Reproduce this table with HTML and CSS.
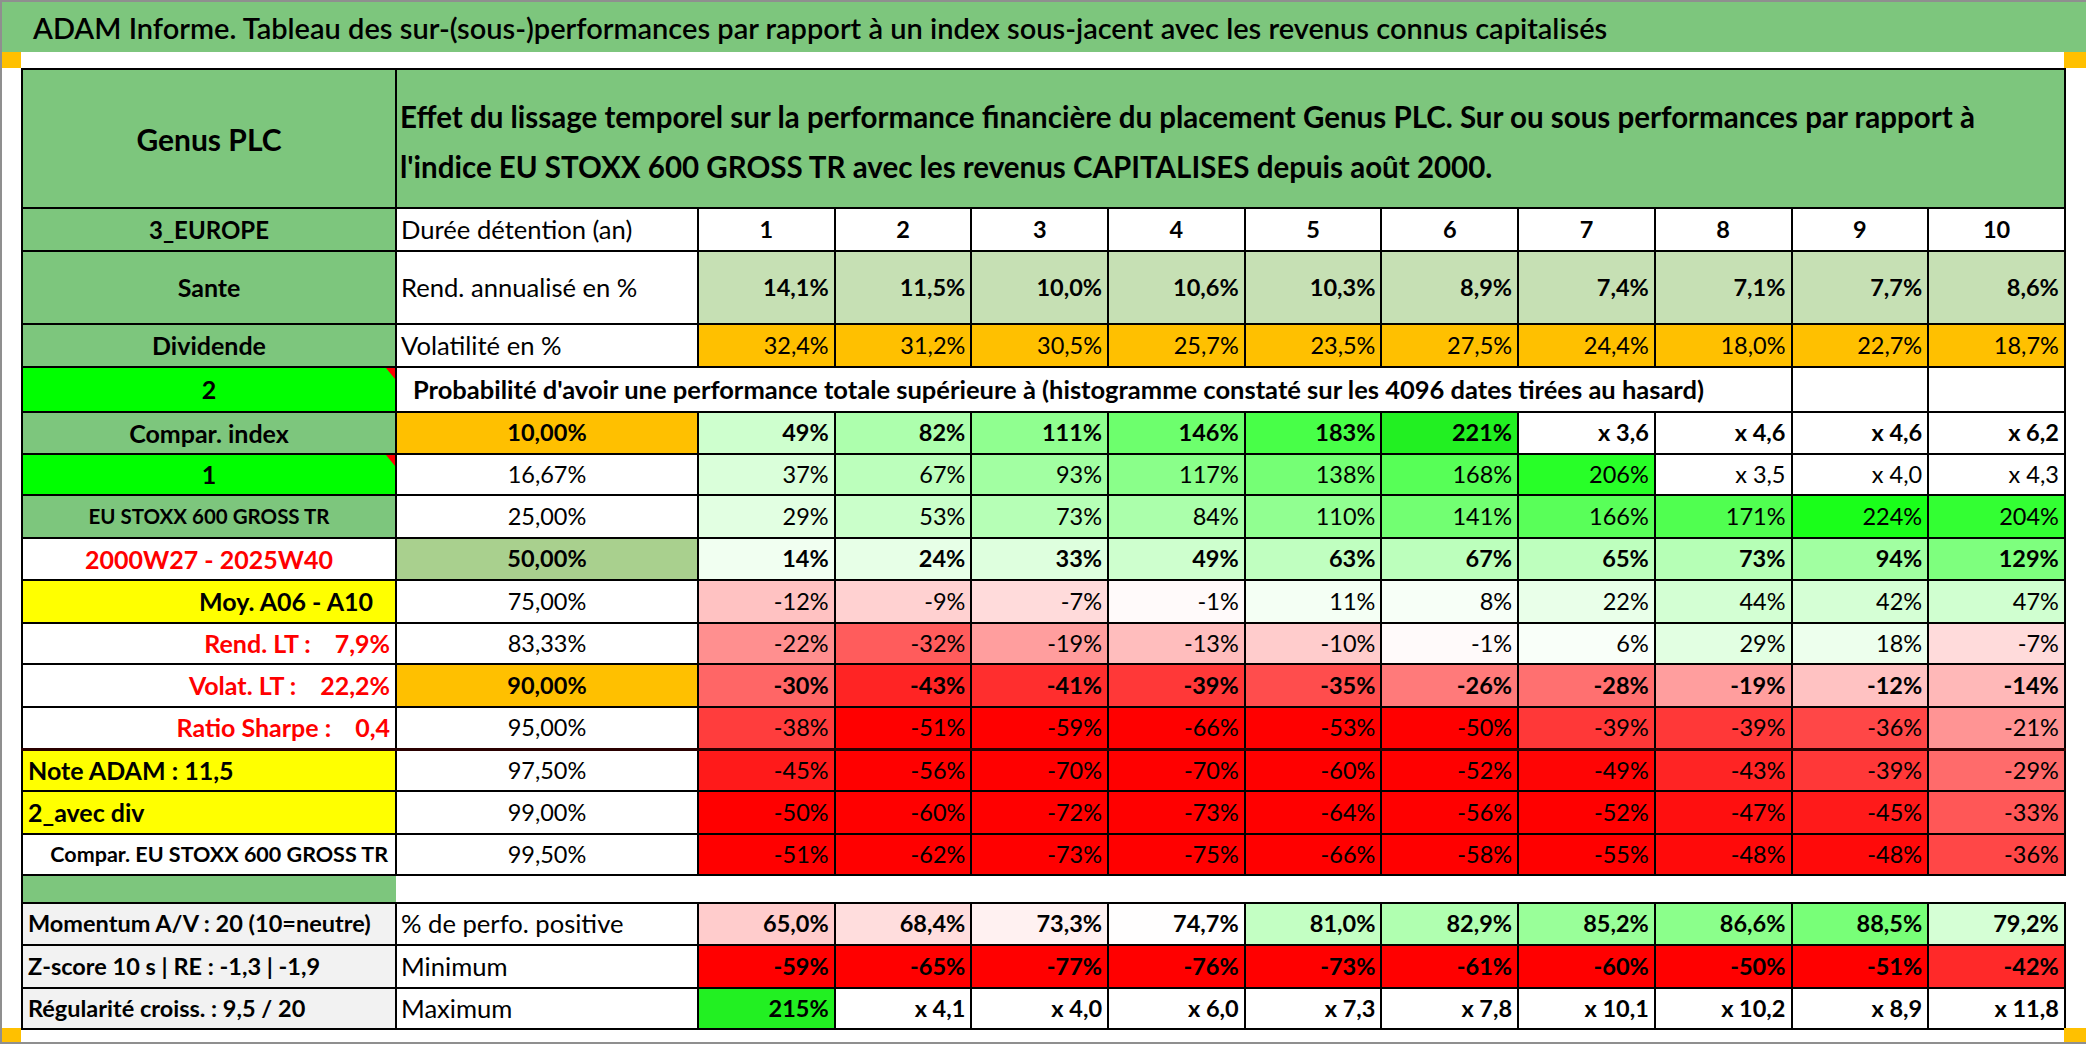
FILE: index.html
```html
<!DOCTYPE html>
<html lang="fr">
<head>
<meta charset="utf-8">
<title>ADAM Informe</title>
<link rel="stylesheet" href="styles.css">
</head>
<body>
<div class="sheet">
  <div class="title">ADAM Informe. Tableau des sur-(sous-)performances par rapport à un index sous-jacent avec les revenus connus capitalisés</div>
  <div class="frame">
    <div class="mark m-tl"></div>
    <div class="mark m-tr"></div>
    <table class="grid">
      <colgroup>
        <col class="c-lbl"><col class="c-txt">
        <col class="c-v"><col class="c-v"><col class="c-v"><col class="c-v"><col class="c-v">
        <col class="c-v"><col class="c-v"><col class="c-v"><col class="c-v"><col class="c-v">
      </colgroup>
      <tr class="r-head">
        <td class="lbl green big">Genus PLC</td>
        <td colspan="11" class="green head">Effet du lissage temporel sur la performance financière du placement Genus PLC. Sur ou sous performances par rapport à<br>l'indice EU STOXX 600 GROSS TR avec les revenus CAPITALISES depuis août 2000.</td>
      </tr>
      <tr class="r43">
        <td class="lbl green caps">3_EUROPE</td>
        <td class="txt">Durée détention (an)</td>
        <td class="dur">1</td><td class="dur">2</td><td class="dur">3</td><td class="dur">4</td><td class="dur">5</td><td class="dur">6</td><td class="dur">7</td><td class="dur">8</td><td class="dur">9</td><td class="dur">10</td>
      </tr>
      <tr class="r73">
        <td class="lbl green">Sante</td>
        <td class="txt">Rend. annualisé en %</td>
        <td class="v b rend">14,1%</td><td class="v b rend">11,5%</td><td class="v b rend">10,0%</td><td class="v b rend">10,6%</td><td class="v b rend">10,3%</td><td class="v b rend">8,9%</td><td class="v b rend">7,4%</td><td class="v b rend">7,1%</td><td class="v b rend">7,7%</td><td class="v b rend">8,6%</td>
      </tr>
      <tr class="r43">
        <td class="lbl green">Dividende</td>
        <td class="txt">Volatilité en %</td>
        <td class="v orange">32,4%</td><td class="v orange">31,2%</td><td class="v orange">30,5%</td><td class="v orange">25,7%</td><td class="v orange">23,5%</td><td class="v orange">27,5%</td><td class="v orange">24,4%</td><td class="v orange">18,0%</td><td class="v orange">22,7%</td><td class="v orange">18,7%</td>
      </tr>
      <tr class="r45">
        <td class="lbl lime flag">2</td>
        <td colspan="9" class="prob">Probabilité d'avoir une performance totale supérieure à (histogramme constaté sur les 4096 dates tirées au hasard)</td>
        <td></td><td></td>
      </tr>
      <tr class="r42">
        <td class="lbl green">Compar. index</td>
        <td class="pct b orange">10,00%</td>
        <td class="v b" style="background:rgb(206,255,206)">49%</td><td class="v b" style="background:rgb(173,255,173)">82%</td><td class="v b" style="background:rgb(144,255,144)">111%</td><td class="v b" style="background:rgb(109,255,109)">146%</td><td class="v b" style="background:rgb(72,255,72)">183%</td><td class="v b" style="background:rgb(34,240,34)">221%</td><td class="v b">x 3,6</td><td class="v b">x 4,6</td><td class="v b">x 4,6</td><td class="v b">x 6,2</td>
      </tr>
      <tr class="r41">
        <td class="lbl lime flag">1</td>
        <td class="pct">16,67%</td>
        <td class="v" style="background:rgb(218,255,218)">37%</td><td class="v" style="background:rgb(188,255,188)">67%</td><td class="v" style="background:rgb(162,255,162)">93%</td><td class="v" style="background:rgb(138,255,138)">117%</td><td class="v" style="background:rgb(117,255,117)">138%</td><td class="v" style="background:rgb(87,255,87)">168%</td><td class="v" style="background:rgb(40,255,40)">206%</td><td class="v">x 3,5</td><td class="v">x 4,0</td><td class="v">x 4,3</td>
      </tr>
      <tr class="r43">
        <td class="lbl green index">EU STOXX 600 GROSS TR</td>
        <td class="pct">25,00%</td>
        <td class="v" style="background:rgb(226,255,226)">29%</td><td class="v" style="background:rgb(202,255,202)">53%</td><td class="v" style="background:rgb(182,255,182)">73%</td><td class="v" style="background:rgb(171,255,171)">84%</td><td class="v" style="background:rgb(145,255,145)">110%</td><td class="v" style="background:rgb(114,255,114)">141%</td><td class="v" style="background:rgb(89,255,89)">166%</td><td class="v" style="background:rgb(80,255,80)">171%</td><td class="v" style="background:rgb(26,255,26)">224%</td><td class="v" style="background:rgb(51,255,51)">204%</td>
      </tr>
      <tr class="r42">
        <td class="lbl red-t">2000W27 - 2025W40</td>
        <td class="pct b sage">50,00%</td>
        <td class="v b" style="background:rgb(241,255,241)">14%</td><td class="v b" style="background:rgb(231,255,231)">24%</td><td class="v b" style="background:rgb(222,255,222)">33%</td><td class="v b" style="background:rgb(206,255,206)">49%</td><td class="v b" style="background:rgb(192,255,192)">63%</td><td class="v b" style="background:rgb(188,255,188)">67%</td><td class="v b" style="background:rgb(190,255,190)">65%</td><td class="v b" style="background:rgb(182,255,182)">73%</td><td class="v b" style="background:rgb(161,255,161)">94%</td><td class="v b" style="background:rgb(126,255,126)">129%</td>
      </tr>
      <tr class="r43">
        <td class="lbl yellow right moy">Moy. A06 - A10</td>
        <td class="pct">75,00%</td>
        <td class="v" style="background:rgb(255,194,194)">-12%</td><td class="v" style="background:rgb(255,209,209)">-9%</td><td class="v" style="background:rgb(255,219,219)">-7%</td><td class="v" style="background:rgb(255,250,250)">-1%</td><td class="v" style="background:rgb(244,255,244)">11%</td><td class="v" style="background:rgb(247,255,247)">8%</td><td class="v" style="background:rgb(233,255,233)">22%</td><td class="v" style="background:rgb(211,255,211)">44%</td><td class="v" style="background:rgb(213,255,213)">42%</td><td class="v" style="background:rgb(208,255,208)">47%</td>
      </tr>
      <tr class="r41">
        <td class="lbl red-t right">Rend. LT :<span class="sp">7,9%</span></td>
        <td class="pct">83,33%</td>
        <td class="v" style="background:rgb(255,143,143)">-22%</td><td class="v" style="background:rgb(255,92,92)">-32%</td><td class="v" style="background:rgb(255,158,158)">-19%</td><td class="v" style="background:rgb(255,189,189)">-13%</td><td class="v" style="background:rgb(255,204,204)">-10%</td><td class="v" style="background:rgb(255,250,250)">-1%</td><td class="v" style="background:rgb(249,255,249)">6%</td><td class="v" style="background:rgb(226,255,226)">29%</td><td class="v" style="background:rgb(237,255,237)">18%</td><td class="v" style="background:rgb(255,219,219)">-7%</td>
      </tr>
      <tr class="r43">
        <td class="lbl red-t right">Volat. LT :<span class="sp">22,2%</span></td>
        <td class="pct b orange">90,00%</td>
        <td class="v b" style="background:rgb(255,102,102)">-30%</td><td class="v b" style="background:rgb(255,36,36)">-43%</td><td class="v b" style="background:rgb(255,46,46)">-41%</td><td class="v b" style="background:rgb(255,56,56)">-39%</td><td class="v b" style="background:rgb(255,77,77)">-35%</td><td class="v b" style="background:rgb(255,122,122)">-26%</td><td class="v b" style="background:rgb(255,112,112)">-28%</td><td class="v b" style="background:rgb(255,158,158)">-19%</td><td class="v b" style="background:rgb(255,194,194)">-12%</td><td class="v b" style="background:rgb(255,184,184)">-14%</td>
      </tr>
      <tr class="r42 thick">
        <td class="lbl red-t right">Ratio Sharpe :<span class="sp">0,4</span></td>
        <td class="pct">95,00%</td>
        <td class="v" style="background:rgb(255,61,61)">-38%</td><td class="v" style="background:rgb(255,0,0)">-51%</td><td class="v" style="background:rgb(255,0,0)">-59%</td><td class="v" style="background:rgb(255,0,0)">-66%</td><td class="v" style="background:rgb(255,0,0)">-53%</td><td class="v" style="background:rgb(255,0,0)">-50%</td><td class="v" style="background:rgb(255,56,56)">-39%</td><td class="v" style="background:rgb(255,56,56)">-39%</td><td class="v" style="background:rgb(255,71,71)">-36%</td><td class="v" style="background:rgb(255,148,148)">-21%</td>
      </tr>
      <tr class="r42">
        <td class="lbl yellow left">Note ADAM : 11,5</td>
        <td class="pct">97,50%</td>
        <td class="v" style="background:rgb(255,26,26)">-45%</td><td class="v" style="background:rgb(255,0,0)">-56%</td><td class="v" style="background:rgb(255,0,0)">-70%</td><td class="v" style="background:rgb(255,0,0)">-70%</td><td class="v" style="background:rgb(255,0,0)">-60%</td><td class="v" style="background:rgb(255,0,0)">-52%</td><td class="v" style="background:rgb(255,5,5)">-49%</td><td class="v" style="background:rgb(255,36,36)">-43%</td><td class="v" style="background:rgb(255,56,56)">-39%</td><td class="v" style="background:rgb(255,107,107)">-29%</td>
      </tr>
      <tr class="r43">
        <td class="lbl yellow left">2_avec div</td>
        <td class="pct">99,00%</td>
        <td class="v" style="background:rgb(255,0,0)">-50%</td><td class="v" style="background:rgb(255,0,0)">-60%</td><td class="v" style="background:rgb(255,0,0)">-72%</td><td class="v" style="background:rgb(255,0,0)">-73%</td><td class="v" style="background:rgb(255,0,0)">-64%</td><td class="v" style="background:rgb(255,0,0)">-56%</td><td class="v" style="background:rgb(255,0,0)">-52%</td><td class="v" style="background:rgb(255,15,15)">-47%</td><td class="v" style="background:rgb(255,26,26)">-45%</td><td class="v" style="background:rgb(255,87,87)">-33%</td>
      </tr>
      <tr class="r41">
        <td class="lbl right comp">Compar. EU STOXX 600 GROSS TR</td>
        <td class="pct">99,50%</td>
        <td class="v" style="background:rgb(255,0,0)">-51%</td><td class="v" style="background:rgb(255,0,0)">-62%</td><td class="v" style="background:rgb(255,0,0)">-73%</td><td class="v" style="background:rgb(255,0,0)">-75%</td><td class="v" style="background:rgb(255,0,0)">-66%</td><td class="v" style="background:rgb(255,0,0)">-58%</td><td class="v" style="background:rgb(255,0,0)">-55%</td><td class="v" style="background:rgb(255,10,10)">-48%</td><td class="v" style="background:rgb(255,10,10)">-48%</td><td class="v" style="background:rgb(255,71,71)">-36%</td>
      </tr>
      <tr class="r28">
        <td class="lbl green"></td>
        <td colspan="11" class="blank"></td>
      </tr>
      <tr class="r42">
        <td class="lbl grey left">Momentum A/V : 20 (10=neutre)</td>
        <td class="txt">% de perfo. positive</td>
        <td class="v b" style="background:rgb(255,204,204)">65,0%</td><td class="v b" style="background:rgb(255,221,221)">68,4%</td><td class="v b" style="background:rgb(255,241,241)">73,3%</td><td class="v b" style="background:rgb(255,254,254)">74,7%</td><td class="v b" style="background:rgb(195,255,195)">81,0%</td><td class="v b" style="background:rgb(176,255,176)">82,9%</td><td class="v b" style="background:rgb(153,255,153)">85,2%</td><td class="v b" style="background:rgb(139,255,139)">86,6%</td><td class="v b" style="background:rgb(120,255,120)">88,5%</td><td class="v b" style="background:rgb(213,255,213)">79,2%</td>
      </tr>
      <tr class="r43">
        <td class="lbl grey left">Z-score 10 s | RE : -1,3 | -1,9</td>
        <td class="txt">Minimum</td>
        <td class="v b" style="background:rgb(255,0,0)">-59%</td><td class="v b" style="background:rgb(255,0,0)">-65%</td><td class="v b" style="background:rgb(255,0,0)">-77%</td><td class="v b" style="background:rgb(255,0,0)">-76%</td><td class="v b" style="background:rgb(255,0,0)">-73%</td><td class="v b" style="background:rgb(255,0,0)">-61%</td><td class="v b" style="background:rgb(255,0,0)">-60%</td><td class="v b" style="background:rgb(255,0,0)">-50%</td><td class="v b" style="background:rgb(255,0,0)">-51%</td><td class="v b" style="background:rgb(255,41,41)">-42%</td>
      </tr>
      <tr class="r41">
        <td class="lbl grey left">Régularité croiss. : 9,5 / 20</td>
        <td class="txt">Maximum</td>
        <td class="v b" style="background:rgb(34,240,34)">215%</td><td class="v b">x 4,1</td><td class="v b">x 4,0</td><td class="v b">x 6,0</td><td class="v b">x 7,3</td><td class="v b">x 7,8</td><td class="v b">x 10,1</td><td class="v b">x 10,2</td><td class="v b">x 8,9</td><td class="v b">x 11,8</td>
      </tr>
    </table>
    <div class="mark m-bl"></div>
    <div class="mark m-br"></div>
  </div>
</div>
</body>
</html>
```

FILE: styles.css
```css
html, body {
  margin: 0;
  padding: 0;
  background: #ffffff;
}

.sheet {
  width: 2086px;
  height: 1044px;
  box-sizing: border-box;
  border-top: 2px solid #8f8f8f;
  border-left: 2px solid #8f8f8f;
  border-bottom: 2px solid #8f8f8f;
  display: flex;
  flex-direction: column;
  overflow: hidden;
  font-family: Lato, "Liberation Sans", sans-serif;
  color: #000;
}

.title {
  height: 50px;
  flex: none;
  background: #7dc67d;
  display: flex;
  align-items: center;
  padding-left: 31px;
  font-size: 29px;
  font-weight: 600;
  white-space: nowrap;
}

.frame {
  display: grid;
  grid-template-columns: 19px 2043px 22px;
  grid-template-rows: 16px 960px 14px;
}

.grid { grid-column: 2; grid-row: 2; }
.m-tl { grid-column: 1; grid-row: 1; }
.m-tr { grid-column: 3; grid-row: 1; }
.m-bl { grid-column: 1; grid-row: 3; }
.m-br { grid-column: 3; grid-row: 3; }

.mark {
  background: #ffc000;
}

.grid {
  width: 2043px;
  height: 960px;
  border-collapse: collapse;
  table-layout: fixed;
}

.c-lbl { width: 374px; }
.c-txt { width: 302px; }
.c-v { width: 136.7px; }

.grid td {
  border: 2px solid #000;
  padding: 0 5px;
  vertical-align: middle;
  white-space: nowrap;
  overflow: hidden;
  font-size: 23.5px;
  line-height: 1;
}

.r-head { height: 139px; }
.r73 { height: 73px; }
.r45 { height: 45px; }
.r43 { height: 43px; }
.r42 { height: 42px; }
.r41 { height: 41px; }
.r28 { height: 28px; }

.thick td { border-bottom: 3px solid #2a0000; }

.grid .lbl {
  text-align: center;
  font-weight: 700;
  font-size: 25px;
}

.grid .lbl.big { font-size: 30px; }
.grid .lbl.caps { font-size: 24px; }
.grid .lbl.index { font-size: 20.5px; }
.grid .lbl.comp { font-size: 21.5px; padding-right: 7px; }
.grid .lbl.grey { font-size: 23.5px; background: #f2f2f2; }
.grid .lbl.left { text-align: left; }
.grid .lbl.right { text-align: right; }
.grid .lbl.moy { padding-right: 22px; }

.green { background: #7dc67d; }
.lime { background: #00ff00; }
.yellow { background: #ffff00; }
.orange { background: #ffc000; }
.sage { background: #a9d08e; }
.rend { background: #c6e0b4; }
.red-t { color: #ff0000; }

.sp { margin-left: 24px; }

.flag { position: relative; }
.flag::after {
  content: "";
  position: absolute;
  top: 0;
  right: 0;
  border-top: 11px solid #ff0000;
  border-left: 9px solid transparent;
}

.grid .head {
  font-weight: 700;
  font-size: 29.5px;
  line-height: 50px;
  padding: 7px 0 0 3px;
}

.grid .txt {
  text-align: left;
  padding-left: 4px;
  font-size: 25.6px;
}

.grid .prob {
  font-weight: 700;
  font-size: 25.5px;
  padding-left: 16px;
}

.dur {
  text-align: center;
  font-weight: 700;
}

.pct { text-align: center; }

.v { text-align: right; }

.b { font-weight: 700; }

.grid .blank {
  border-left-style: hidden;
  border-right-style: hidden;
}
```
